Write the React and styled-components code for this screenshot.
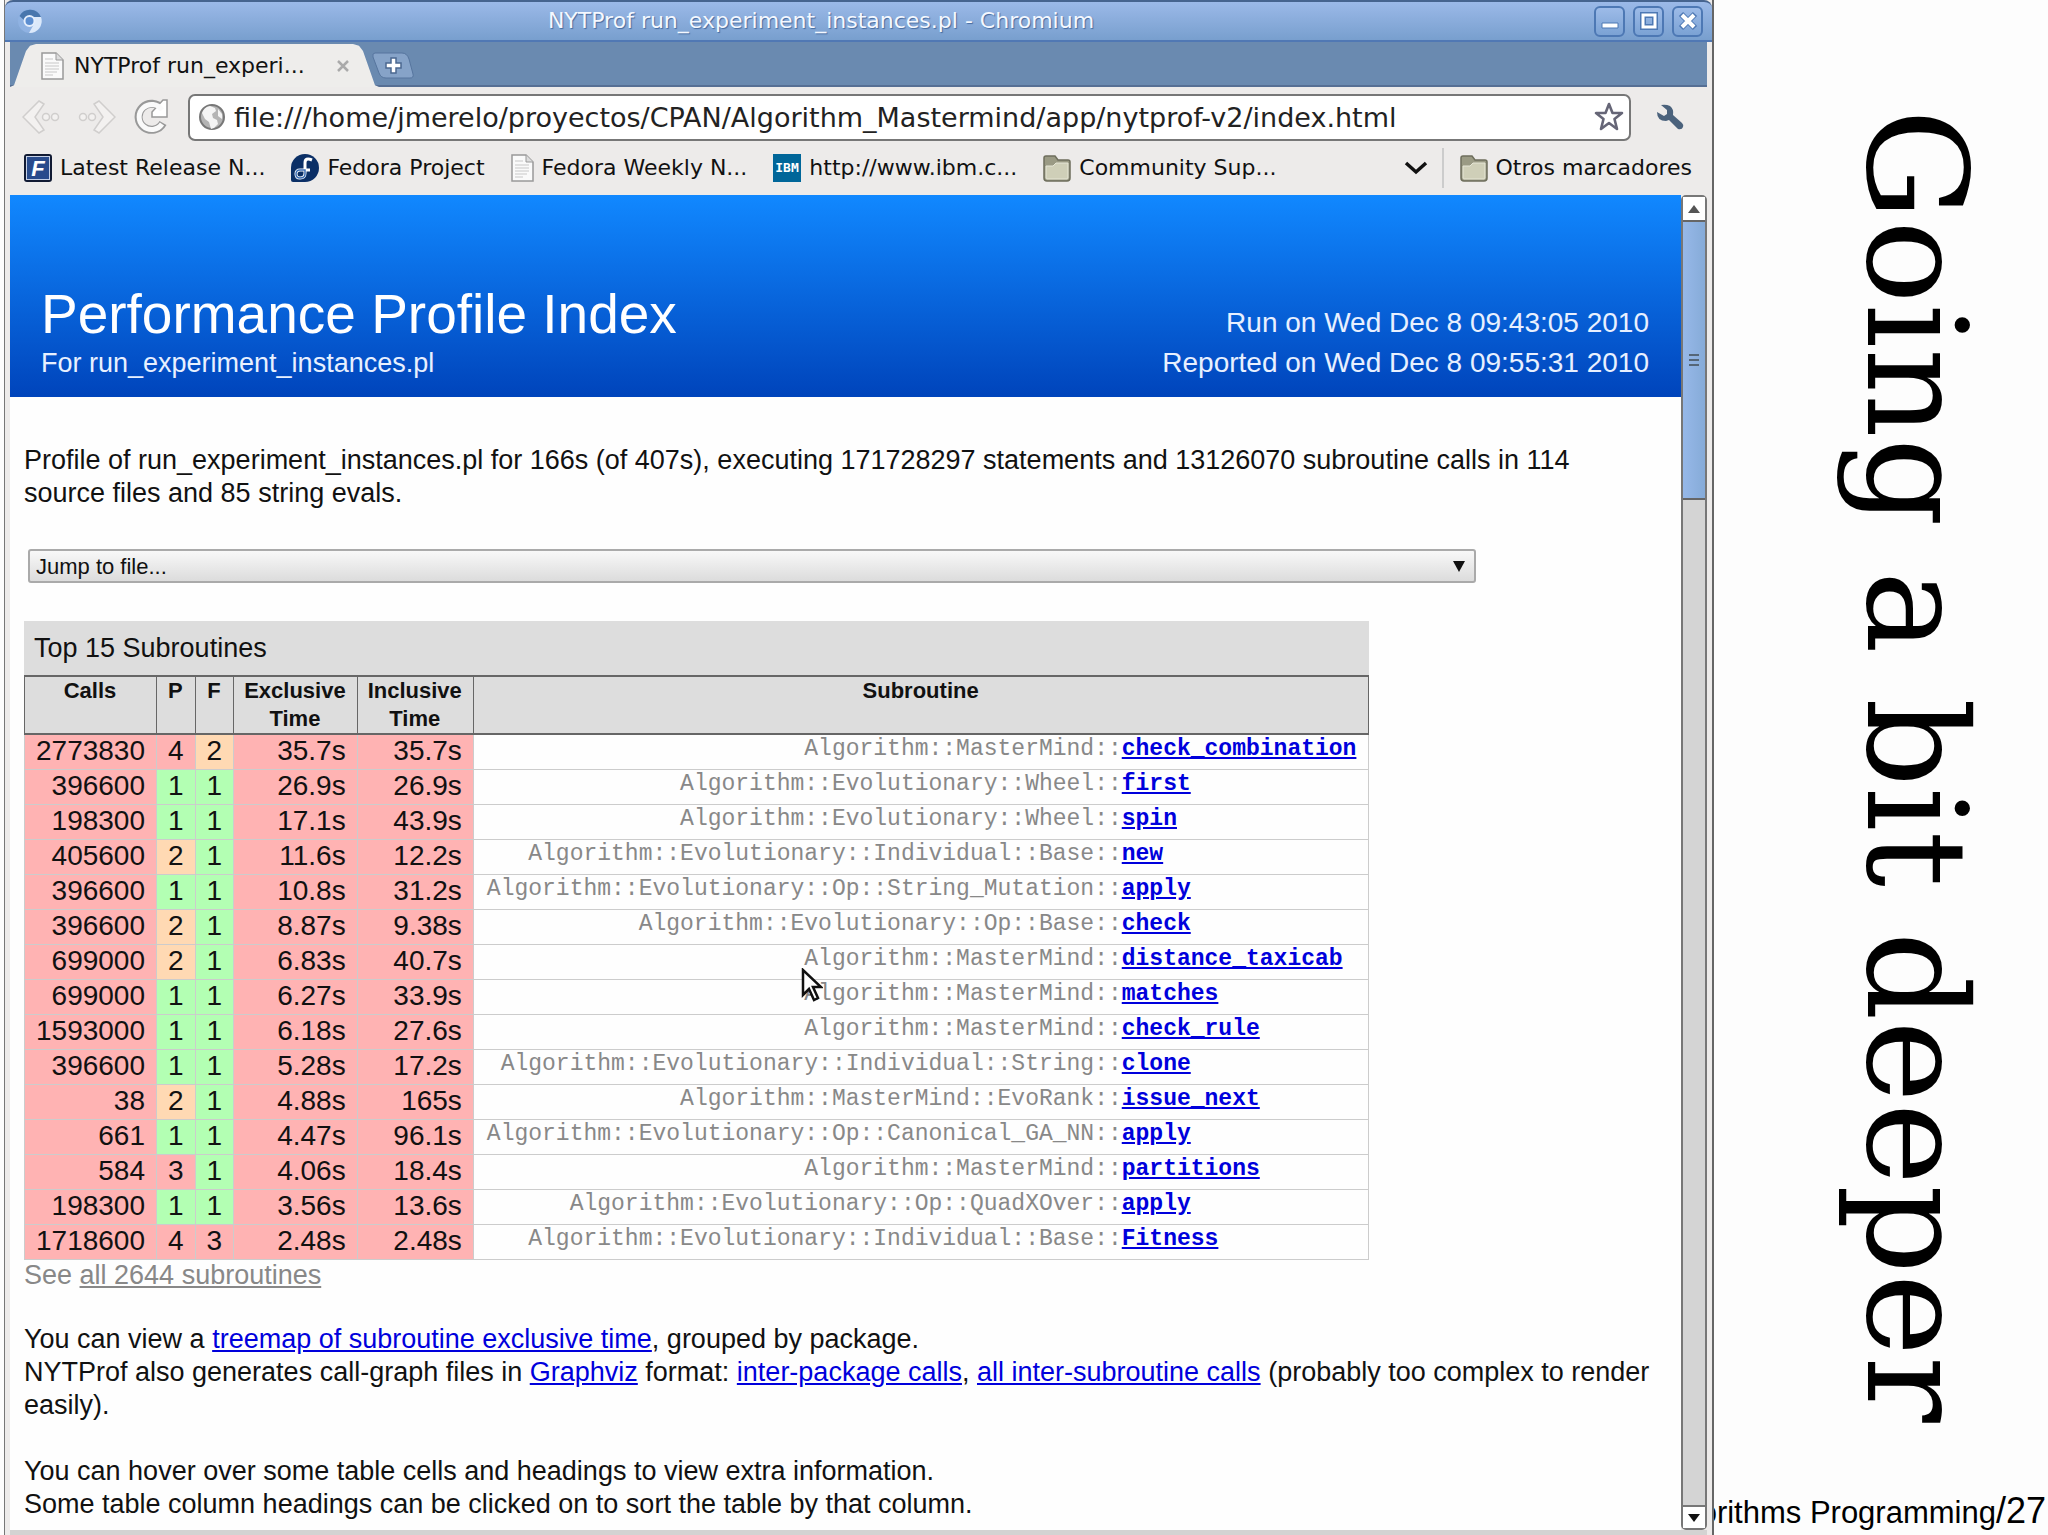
import { useState } from 'react';
import styled, { createGlobalStyle } from 'styled-components';

const GlobalStyle = createGlobalStyle`
  * {
    box-sizing: border-box;
  }
  body {
    margin: 0;
    background: #fdfdfd;
    font-family: 'Liberation Sans', Arial, sans-serif;
    font-size: 27px;
    line-height: 33px;
    color: #111;
  }
  button {
    padding: 0;
    border: none;
    background: none;
    font: inherit;
    color: inherit;
  }
`;

const Slide = styled.div`
  display: grid;
  grid-template-columns: minmax(0, 1fr) 334px;
  min-height: 100vh;
  overflow: hidden;
`;

/* browser window */
const Window = styled.section`
  display: flex;
  flex-direction: column;
  margin-left: 4px;
  border-left: 1px solid #777;
  border-right: 2px solid #666;
  background: #edebea;
  font-family: 'DejaVu Sans', sans-serif;
  font-size: 22px;
  line-height: 28px;
`;
const TitleBar = styled.header`
  display: grid;
  grid-template-columns: 1fr auto 1fr;
  align-items: center;
  height: 42px;
  padding: 2px 9px 2px 12px;
  border-top: 2px solid #46648f;
  border-bottom: 2px solid #5078b4;
  border-radius: 8px 8px 0 0;
  background: linear-gradient(#9bb9e8, #789fce);
  color: #f4f8ff;
  text-shadow: 1px 1px 1px #456a9e;
`;
const WindowTitle = styled.span`
  padding-right: 78px;
  white-space: nowrap;
`;
const WindowButtons = styled.div`
  display: flex;
  justify-content: flex-end;
  gap: 8px;
`;
const WindowButton = styled.button`
  display: flex;
  align-items: center;
  justify-content: center;
  width: 31px;
  height: 31px;
  border: 2px solid #4d78b4;
  border-radius: 6px;
  background: linear-gradient(#9dbbe8, #7ba2d4);
`;
const TabStrip = styled.div`
  display: flex;
  align-items: flex-end;
  height: 45px;
  margin: 0 5px;
  border-bottom: 2px solid #566f94;
  background: #6a8ab0;
`;
const Tab = styled.div`
  display: flex;
  align-items: center;
  gap: 10px;
  width: 369px;
  height: 43px;
  margin-bottom: -2px;
  padding: 0 29px 0 31px;
  background: #eeedeb;
  white-space: nowrap;
  clip-path: polygon(
    0 100%, 4px 96%, 16px 16%, 20px 4%, 26px 0,
    calc(100% - 26px) 0, calc(100% - 20px) 4%, calc(100% - 16px) 16%, calc(100% - 4px) 96%, 100% 100%
  );
  button {
    display: flex;
    margin-left: auto;
  }
`;
const NewTab = styled.button`
  align-self: center;
  display: flex;
  margin: 5px 0 0 -8px;
`;
const Toolbar = styled.div`
  display: flex;
  align-items: center;
  gap: 18px;
  height: 63px;
  padding: 0 28px 3px 17px;
  button {
    display: flex;
  }
  > button:last-child {
    margin-left: 7px;
  }
`;
const AddressBar = styled.div`
  flex: 1;
  display: flex;
  align-items: center;
  gap: 8px;
  height: 47px;
  padding: 0 5px 0 8px;
  border: 2px solid #777;
  border-radius: 7px;
  background: #fff;
  input {
    flex: 1;
    min-width: 0;
    padding: 0;
    border: none;
    outline: none;
    background: none;
    font: 27px 'DejaVu Sans', sans-serif;
    color: #222;
  }
`;
const BookmarkBar = styled.nav`
  display: flex;
  align-items: center;
  gap: 26px;
  height: 45px;
  padding: 0 20px 10px 19px;
  a {
    display: flex;
    align-items: center;
    gap: 8px;
    color: #111;
    text-decoration: none;
    white-space: nowrap;
  }
  button {
    display: flex;
    margin-left: auto;
  }
`;
const OtherBookmarks = styled.div`
  margin-left: -12px;
  padding: 6px 0 6px 16px;
  border-left: 2px solid #ccc;
`;

/* viewport */
const Viewport = styled.div`
  flex: 1;
  display: flex;
  margin: 0 5px;
  border-bottom: 5px solid #d4d3d2;
`;
const Page = styled.main`
  position: relative;
  flex: 1;
  min-width: 0;
  background: #fefefe;
  font-family: 'Liberation Sans', Arial, sans-serif;
  font-size: 27px;
  line-height: 33px;
  a {
    color: #0000dc;
  }
`;
const Banner = styled.div`
  display: flex;
  align-items: flex-end;
  justify-content: space-between;
  height: 202px;
  padding: 0 32px 14px 31px;
  background: linear-gradient(#18f, #04b);
  color: #e8f0ff;
  line-height: 40px;
  h1 {
    margin: 0;
    color: #fff;
    font-size: 55px;
    font-weight: normal;
    line-height: 58px;
  }
`;
const RunTimes = styled.div`
  font-size: 28px;
  text-align: right;
`;
const Content = styled.div`
  padding: 47px 14px 8px;
  p {
    margin: 0 0 33px;
  }
  p:last-child {
    margin-bottom: 0;
  }
`;
const JumpForm = styled.form`
  position: relative;
  width: 1448px;
  max-width: 100%;
  margin: 39px 4px 38px;
  select {
    appearance: none;
    display: block;
    width: 100%;
    height: 34px;
    padding: 0 6px;
    border: 2px solid #aaa;
    border-radius: 3px;
    background: linear-gradient(#f8f8f8, #dcdcdc);
    font: 22px 'Liberation Sans', Arial, sans-serif;
    color: #111;
  }
  svg {
    position: absolute;
    right: 11px;
    top: 11px;
    pointer-events: none;
  }
`;
const SubTable = styled.table`
  border-collapse: collapse;
  caption {
    padding: 10px;
    background: #ddd;
    text-align: left;
    line-height: 34px;
  }
  th {
    padding: 0 11px 0 10px;
    border: 2px solid #666;
    border-width: 2px 1px;
    background: #ddd;
    font-size: 22px;
    line-height: 28px;
    vertical-align: top;
  }
`;
const LEVELS = { bad: '#ffb3b3', mid: '#ffd9b3', good: '#b3ffb3' };
const Cell = styled.td`
  height: 35px;
  padding: 0 11px 3px;
  border: 1px solid #ccc;
  background: ${(props) => LEVELS[props.$level]};
  font-size: 28px;
  line-height: 31px;
  text-align: right;
`;
const NameCell = styled.td`
  padding: 0 0 0 13px;
  border: solid #ccc;
  border-width: 1px 0;
  color: #888;
  font: 23px/28px 'Liberation Mono', monospace;
  text-align: right;
  vertical-align: top;
  &:last-child {
    padding: 0 12px 0 0;
    border-right-width: 1px;
    text-align: left;
    font-weight: bold;
  }
`;
const SeeAll = styled.div`
  margin-bottom: 33px;
  color: #888;
  line-height: 30px;
  && a {
    color: #888;
  }
`;
const Pointer = styled.svg`
  position: absolute;
  left: 791px;
  top: 773px;
`;

const ScrollBar = styled.div`
  display: flex;
  flex-direction: column;
  width: 26px;
  border: 2px solid #777;
  border-radius: 5px;
  background: #d4d4d4;
  button {
    display: flex;
    align-items: center;
    justify-content: center;
    height: 23px;
    background: #fff;
  }
  button:last-child {
    border-top: 2px solid #777;
  }
`;
const Thumb = styled.div`
  display: flex;
  align-items: center;
  justify-content: center;
  height: 280px;
  margin-bottom: auto;
  border: solid #666;
  border-width: 2px 0;
  background: linear-gradient(90deg, #96b8e8, #86abd8);
`;

/* slide margin */
const Side = styled.aside`
  display: flex;
  flex-direction: column;
  justify-content: space-between;
  min-width: 0;
  overflow: hidden;
  color: #000;
`;
const SlideTitle = styled.h2`
  align-self: flex-end;
  margin: 109px 50px 0 0;
  font-family: 'DejaVu Serif', serif;
  font-size: 139px;
  font-weight: normal;
  line-height: 164px;
  white-space: nowrap;
  writing-mode: vertical-rl;
`;
const SlideFooter = styled.footer`
  display: flex;
  align-items: baseline;
  justify-content: flex-end;
  padding: 0 2px 2px 0;
  font-size: 31px;
  line-height: 40px;
  white-space: nowrap;
  span {
    font-size: 36px;
  }
`;

const ChromiumIcon = () => (
  <svg width="26" height="26" viewBox="0 0 26 26">
    <circle cx="13" cy="13" r="12" fill="#8fb2e2" />
    <path d="M2.500 8A12 12 0 0 1 24 9H13a5 5 0 0 0-5 4z" fill="#4876ad" />
    <path d="M24 9a12 12 0 0 1-12 16l5-9a5 5 0 0 0-1-7z" fill="#dce9fa" />
    <circle cx="12.500" cy="13" r="5" fill="#5c8ed0" stroke="#e4eefc" strokeWidth="2" />
  </svg>
);
const PageIcon = () => (
  <svg width="23" height="28" viewBox="0 0 23 28">
    <path d="M1 1h14l7 7v19H1z" fill="#fafafa" stroke="#999" strokeWidth="1.500" />
    <path d="M15 1v7h7" fill="#ddd" stroke="#999" />
    <path d="M4 7h8M4 11h14M4 14h14M4 17h14M4 20h12M4 23h8" stroke="#c8c8c8" />
  </svg>
);
const CloseIcon = () => (
  <svg width="14" height="14" viewBox="0 0 14 14">
    <path d="M2 2l10 10M12 2L2 12" stroke="#aaa" strokeWidth="2.500" />
  </svg>
);
const NewTabIcon = () => (
  <svg width="44" height="28" viewBox="0 0 44 28">
    <path d="M4 1h27q5 0 7 6l4 15q1 4-3 4H15q-5 0-7-5L2 5q-1-4 2-4z" fill="#86a3c8" stroke="#56759e" />
    <path d="M20 6h5v5h5v5h-5v5h-5v-5h-5v-5h5z" fill="#fff" stroke="#4b6890" strokeWidth="1.500" />
  </svg>
);
const ArrowIcon = ({ flip }) => (
  <svg width="38" height="34" viewBox="0 0 38 34">
    <g transform={flip ? 'translate(38 0) scale(-1 1)' : undefined} fill="#f3f1f0" stroke="#d0cecd" strokeWidth="1.500">
      <path d="M17 1l5 3-9 13 9 13-5 3L1 17z" />
      <circle cx="24" cy="17" r="3.500" />
      <circle cx="33" cy="17" r="3.500" />
    </g>
  </svg>
);
const ReloadIcon = () => (
  <svg width="36" height="36" viewBox="0 0 36 36" fill="none">
    <path d="M29 24a13 13 0 1 1-1-14" stroke="#999" strokeWidth="8" />
    <path d="M33 1v17H18v-5l11-12z" fill="#fff" stroke="#999" strokeWidth="1.500" />
    <path d="M28 25a12.500 12.500 0 1 1 0-14" stroke="#fafafa" strokeWidth="5" />
  </svg>
);
const GlobeIcon = () => (
  <svg width="28" height="28" viewBox="0 0 28 28">
    <circle cx="14" cy="14" r="12" fill="#b4b4b4" stroke="#777" strokeWidth="2" />
    <path d="M4 10q2-6 8-7l5 2 1 3-4 3 1 4 4 2 1 4-4 4-3 1-2-7-4-3z" fill="#f4f4f4" />
    <path d="M20 6l4 5v5l-4-3z" fill="#f4f4f4" />
  </svg>
);
const StarIcon = () => (
  <svg width="30" height="30" viewBox="0 0 30 30">
    <path d="M15 2l3.500 9H28l-7.500 6L23 27l-8-6-8 6 2.500-10L2 11h9.500z" fill="#fff" stroke="#667" strokeWidth="2.600" strokeLinejoin="round" />
  </svg>
);
const WrenchIcon = () => (
  <svg width="28" height="28" viewBox="0 0 28 28">
    <path d="M5 2l6 5v4l-3 2-7-4q0 9 9 9l3-1 9 9q4 1 5-2 1-2-1-4l-9-8q1-6-3-9-4-2-9-1z" fill="#4b627c" />
  </svg>
);
const ReleaseIcon = () => (
  <svg width="28" height="28" viewBox="0 0 28 28">
    <rect x="1" y="1" width="26" height="26" rx="2" fill="#294b8c" stroke="#111a33" strokeWidth="2" />
    <rect x="2.500" y="2.500" width="23" height="23" fill="none" stroke="#c5d0e6" />
    <text x="14" y="22" textAnchor="middle" fill="#fff" fontFamily="Liberation Sans" fontWeight="bold" fontStyle="italic" fontSize="22">F</text>
  </svg>
);
const FedoraIcon = () => (
  <svg width="28" height="28" viewBox="0 0 28 28">
    <path d="M14 0a14 14 0 1 1 0 28H2q-2 0-2-2V14A14 14 0 0 1 14 0z" fill="#0b2f66" />
    <path d="M21 6q-7-3-7 3v10q0 5-5 5-4 0-4-4t4-4h10" fill="none" stroke="#fff" strokeWidth="3" />
    <path d="M5 20q0-4 4-4h5v4q0 4-5 4-4 0-4-4z" fill="none" stroke="#3c6eb4" strokeWidth="1.500" />
  </svg>
);
const IbmIcon = () => (
  <svg width="28" height="28" viewBox="0 0 28 28">
    <path d="M0 0h28v28H0z" fill="#006699" />
    <text x="14" y="18" textAnchor="middle" fill="#fff" fontFamily="DejaVu Sans Mono" fontWeight="bold" fontSize="13">IBM</text>
  </svg>
);
const FolderIcon = () => (
  <svg width="28" height="28" viewBox="0 0 28 28">
    <path d="M1 4q0-2 2-2h9l3 4h10q2 0 2 2v16q0 3-3 3H4q-3 0-3-3z" fill="#9a9a84" stroke="#6e6e5c" strokeWidth="1.500" />
    <path d="M3 12h7l3-3h12v15q0 1-1 1H4q-1 0-1-1z" fill="#cfcfb8" stroke="#e6e6d6" />
  </svg>
);

const BOOKMARKS = [
  { name: 'Latest Release N...', Icon: ReleaseIcon },
  { name: 'Fedora Project', Icon: FedoraIcon },
  { name: 'Fedora Weekly N...', Icon: PageIcon },
  { name: 'http://www.ibm.c...', Icon: IbmIcon },
  { name: 'Community Sup...', Icon: FolderIcon },
];

const ROWS = [
  [2773830, 4, 2, '35.7s', '35.7s', 'Algorithm::MasterMind::', 'check_combination'],
  [396600, 1, 1, '26.9s', '26.9s', 'Algorithm::Evolutionary::Wheel::', 'first'],
  [198300, 1, 1, '17.1s', '43.9s', 'Algorithm::Evolutionary::Wheel::', 'spin'],
  [405600, 2, 1, '11.6s', '12.2s', 'Algorithm::Evolutionary::Individual::Base::', 'new'],
  [396600, 1, 1, '10.8s', '31.2s', 'Algorithm::Evolutionary::Op::String_Mutation::', 'apply'],
  [396600, 2, 1, '8.87s', '9.38s', 'Algorithm::Evolutionary::Op::Base::', 'check'],
  [699000, 2, 1, '6.83s', '40.7s', 'Algorithm::MasterMind::', 'distance_taxicab'],
  [699000, 1, 1, '6.27s', '33.9s', 'Algorithm::MasterMind::', 'matches'],
  [1593000, 1, 1, '6.18s', '27.6s', 'Algorithm::MasterMind::', 'check_rule'],
  [396600, 1, 1, '5.28s', '17.2s', 'Algorithm::Evolutionary::Individual::String::', 'clone'],
  [38, 2, 1, '4.88s', '165s', 'Algorithm::MasterMind::EvoRank::', 'issue_next'],
  [661, 1, 1, '4.47s', '96.1s', 'Algorithm::Evolutionary::Op::Canonical_GA_NN::', 'apply'],
  [584, 3, 1, '4.06s', '18.4s', 'Algorithm::MasterMind::', 'partitions'],
  [198300, 1, 1, '3.56s', '13.6s', 'Algorithm::Evolutionary::Op::QuadXOver::', 'apply'],
  [1718600, 4, 3, '2.48s', '2.48s', 'Algorithm::Evolutionary::Individual::Base::', 'Fitness'],
];

const levelOf = (count) => (count === 1 ? 'good' : count === 2 ? 'mid' : 'bad');

function BrowserChrome() {
  const [url, setUrl] = useState(
    'file:///home/jmerelo/proyectos/CPAN/Algorithm_Mastermind/app/nytprof-v2/index.html'
  );
  return (
    <>
      <TitleBar>
        <ChromiumIcon />
        <WindowTitle>NYTProf run_experiment_instances.pl - Chromium</WindowTitle>
        <WindowButtons>
          <WindowButton aria-label="Minimize">
            <svg width="20" height="20" viewBox="0 0 20 20">
              <path d="M2 12h16v5H2z" fill="#fff" stroke="#4d78b4" />
            </svg>
          </WindowButton>
          <WindowButton aria-label="Maximize">
            <svg width="20" height="20" viewBox="0 0 20 20" fill="none">
              <path d="M4 4h12v12H4z" stroke="#4d78b4" strokeWidth="6" />
              <path d="M4 4h12v12H4z" stroke="#fff" strokeWidth="3" />
            </svg>
          </WindowButton>
          <WindowButton aria-label="Close">
            <svg width="20" height="20" viewBox="0 0 20 20" fill="none">
              <path d="M3 3l14 14M17 3L3 17" stroke="#4d78b4" strokeWidth="6" />
              <path d="M4 4l12 12M16 4L4 16" stroke="#fff" strokeWidth="4" />
            </svg>
          </WindowButton>
        </WindowButtons>
      </TitleBar>
      <TabStrip>
        <Tab>
          <PageIcon />
          NYTProf run_experi...
          <button type="button" aria-label="Close tab">
            <CloseIcon />
          </button>
        </Tab>
        <NewTab type="button" aria-label="New tab">
          <NewTabIcon />
        </NewTab>
      </TabStrip>
      <Toolbar>
        <button type="button" aria-label="Back">
          <ArrowIcon />
        </button>
        <button type="button" aria-label="Forward">
          <ArrowIcon flip />
        </button>
        <button type="button" aria-label="Reload">
          <ReloadIcon />
        </button>
        <AddressBar>
          <GlobeIcon />
          <input aria-label="Address" value={url} onChange={(e) => setUrl(e.target.value)} />
          <button type="button" aria-label="Bookmark this page">
            <StarIcon />
          </button>
        </AddressBar>
        <button type="button" aria-label="Settings">
          <WrenchIcon />
        </button>
      </Toolbar>
      <BookmarkBar>
        {BOOKMARKS.map(({ name, Icon }) => (
          <a key={name} href="#">
            <Icon />
            {name}
          </a>
        ))}
        <button type="button" aria-label="More bookmarks">
          <svg width="24" height="16" viewBox="0 0 24 16" fill="none">
            <path d="M2 3l10 9L22 3" stroke="#111" strokeWidth="3.500" />
          </svg>
        </button>
        <OtherBookmarks>
          <a href="#">
            <FolderIcon />
            Otros marcadores
          </a>
        </OtherBookmarks>
      </BookmarkBar>
    </>
  );
}

function Subroutines() {
  return (
    <SubTable>
      <caption>Top 15 Subroutines</caption>
      <thead>
        <tr>
          <th>Calls</th>
          <th>P</th>
          <th>F</th>
          <th>
            Exclusive
            <br />
            Time
          </th>
          <th>
            Inclusive
            <br />
            Time
          </th>
          <th colSpan={2}>Subroutine</th>
        </tr>
      </thead>
      <tbody>
        {ROWS.map(([calls, p, f, excl, incl, pkg, name], index) => (
          <tr key={index}>
            <Cell $level="bad">{calls}</Cell>
            <Cell $level={levelOf(p)}>{p}</Cell>
            <Cell $level={levelOf(f)}>{f}</Cell>
            <Cell $level="bad">{excl}</Cell>
            <Cell $level="bad">{incl}</Cell>
            <NameCell>{pkg}</NameCell>
            <NameCell>
              <a href="#">{name}</a>
            </NameCell>
          </tr>
        ))}
      </tbody>
    </SubTable>
  );
}

export default function App() {
  return (
    <>
      <GlobalStyle />
      <Slide>
        <Window>
          <BrowserChrome />
          <Viewport>
            <Page>
              <Banner>
                <div>
                  <h1>Performance Profile Index</h1>
                  For run_experiment_instances.pl
                </div>
                <RunTimes>
                  Run on Wed Dec 8 09:43:05 2010
                  <br />
                  Reported on Wed Dec 8 09:55:31 2010
                </RunTimes>
              </Banner>
              <Content>
                <p>
                  Profile of run_experiment_instances.pl for 166s (of 407s), executing 171728297
                  statements and 13126070 subroutine calls in 114
                  <br />
                  source files and 85 string evals.
                </p>
                <JumpForm>
                  <select aria-label="Jump to file">
                    <option>Jump to file...</option>
                  </select>
                  <svg width="12" height="12" viewBox="0 0 12 12">
                    <path d="M0 1h12L6 12z" fill="#111" />
                  </svg>
                </JumpForm>
                <Subroutines />
                <SeeAll>
                  See <a href="#">all 2644 subroutines</a>
                </SeeAll>
                <p>
                  You can view a <a href="#">treemap of subroutine exclusive time</a>, grouped by
                  package.
                  <br />
                  NYTProf also generates call-graph files in <a href="#">Graphviz</a> format:{' '}
                  <a href="#">inter-package calls</a>, <a href="#">all inter-subroutine calls</a>{' '}
                  (probably too complex to render easily).
                </p>
                <p>
                  You can hover over some table cells and headings to view extra information.
                  <br />
                  Some table column headings can be clicked on to sort the table by that column.
                </p>
              </Content>
              <Pointer width="22" height="34" viewBox="0 0 22 34">
                <path d="M2 2v25l6-6 5 11 4-2-5-11h8z" fill="#fff" stroke="#111" strokeWidth="2.500" />
              </Pointer>
            </Page>
            <ScrollBar>
              <button type="button" aria-label="Scroll up">
                <svg width="12" height="8" viewBox="0 0 12 8">
                  <path d="M0 8h12L6 0z" fill="#555" />
                </svg>
              </button>
              <Thumb>
                <svg width="10" height="12" viewBox="0 0 10 12">
                  <path d="M0 1h10M0 6h10M0 11h10" stroke="#567" strokeWidth="2" />
                </svg>
              </Thumb>
              <button type="button" aria-label="Scroll down">
                <svg width="12" height="8" viewBox="0 0 12 8">
                  <path d="M0 0h12L6 8z" fill="#111" />
                </svg>
              </button>
            </ScrollBar>
          </Viewport>
        </Window>
        <Side>
          <SlideTitle>Going a bit deeper</SlideTitle>
          <SlideFooter>
            orithms Programming<span>/27</span>
          </SlideFooter>
        </Side>
      </Slide>
    </>
  );
}
